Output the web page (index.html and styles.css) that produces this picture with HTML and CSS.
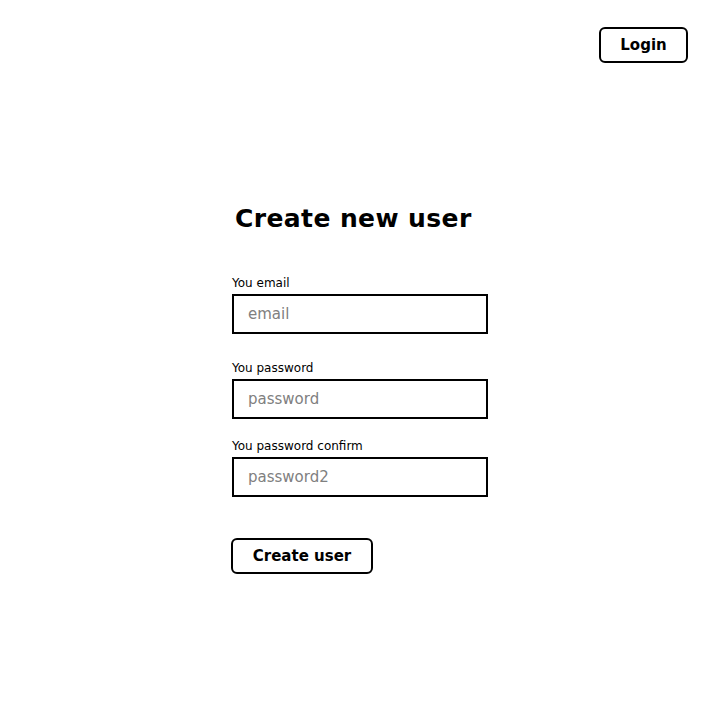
FILE: index.html
```html
<!DOCTYPE html>
<html>
<head>
<meta charset="utf-8">
<link rel="stylesheet" href="styles.css">
</head>
<body>
<header class="topbar">
  <button class="btn btn-login">Login</button>
</header>
<main class="page">
  <form class="signup">
    <h1 class="title">Create new user</h1>
    <div class="field field-first">
      <label class="label">You email</label>
      <input class="input" type="text" placeholder="email">
    </div>
    <div class="field field-second">
      <label class="label">You password</label>
      <input class="input" type="password" placeholder="password">
    </div>
    <div class="field field-third">
      <label class="label">You password confirm</label>
      <input class="input" type="password" placeholder="password2">
    </div>
    <button class="btn btn-create" type="button">Create user</button>
  </form>
</main>
</body>
</html>
```

FILE: styles.css
```css
html, body {
  margin: 0;
  padding: 0;
  background: #fff;
  color: #000;
  font-family: "Comic Sans MS", "DejaVu Sans", sans-serif;
}
.topbar {
  display: flex;
  justify-content: flex-end;
  padding: 27px 32px 0 0;
}
.btn {
  font-family: inherit;
  font-weight: bold;
  font-size: 15px;
  background: #fff;
  color: #000;
  border: 2px solid #000;
  border-radius: 6px;
  height: 36px;
  padding: 0;
  cursor: pointer;
}
.btn-login {
  width: 89px;
}
.page {
  display: flex;
  justify-content: center;
}
.signup {
  width: 256px;
  display: flex;
  flex-direction: column;
  margin-top: 138px;
}
.title {
  margin: 0 0 0 3px;
  font-size: 25px;
  line-height: 36px;
  font-weight: bold;
  letter-spacing: 0.4px;
  white-space: nowrap;
}
.field {
  display: flex;
  flex-direction: column;
}
.field-first { margin-top: 38px; }
.field-second { margin-top: 26px; }
.field-third { margin-top: 19px; }
.label {
  font-size: 12px;
  line-height: 16px;
  margin-bottom: 3px;
}
.input {
  box-sizing: border-box;
  width: 256px;
  height: 40px;
  border: 2px solid #000;
  border-radius: 0;
  padding: 0 14px;
  font-family: inherit;
  font-size: 15px;
  outline: none;
}
.input::placeholder {
  color: #808080;
}
.btn-create {
  margin-top: 41px;
  margin-left: -1px;
  width: 142px;
}
```
